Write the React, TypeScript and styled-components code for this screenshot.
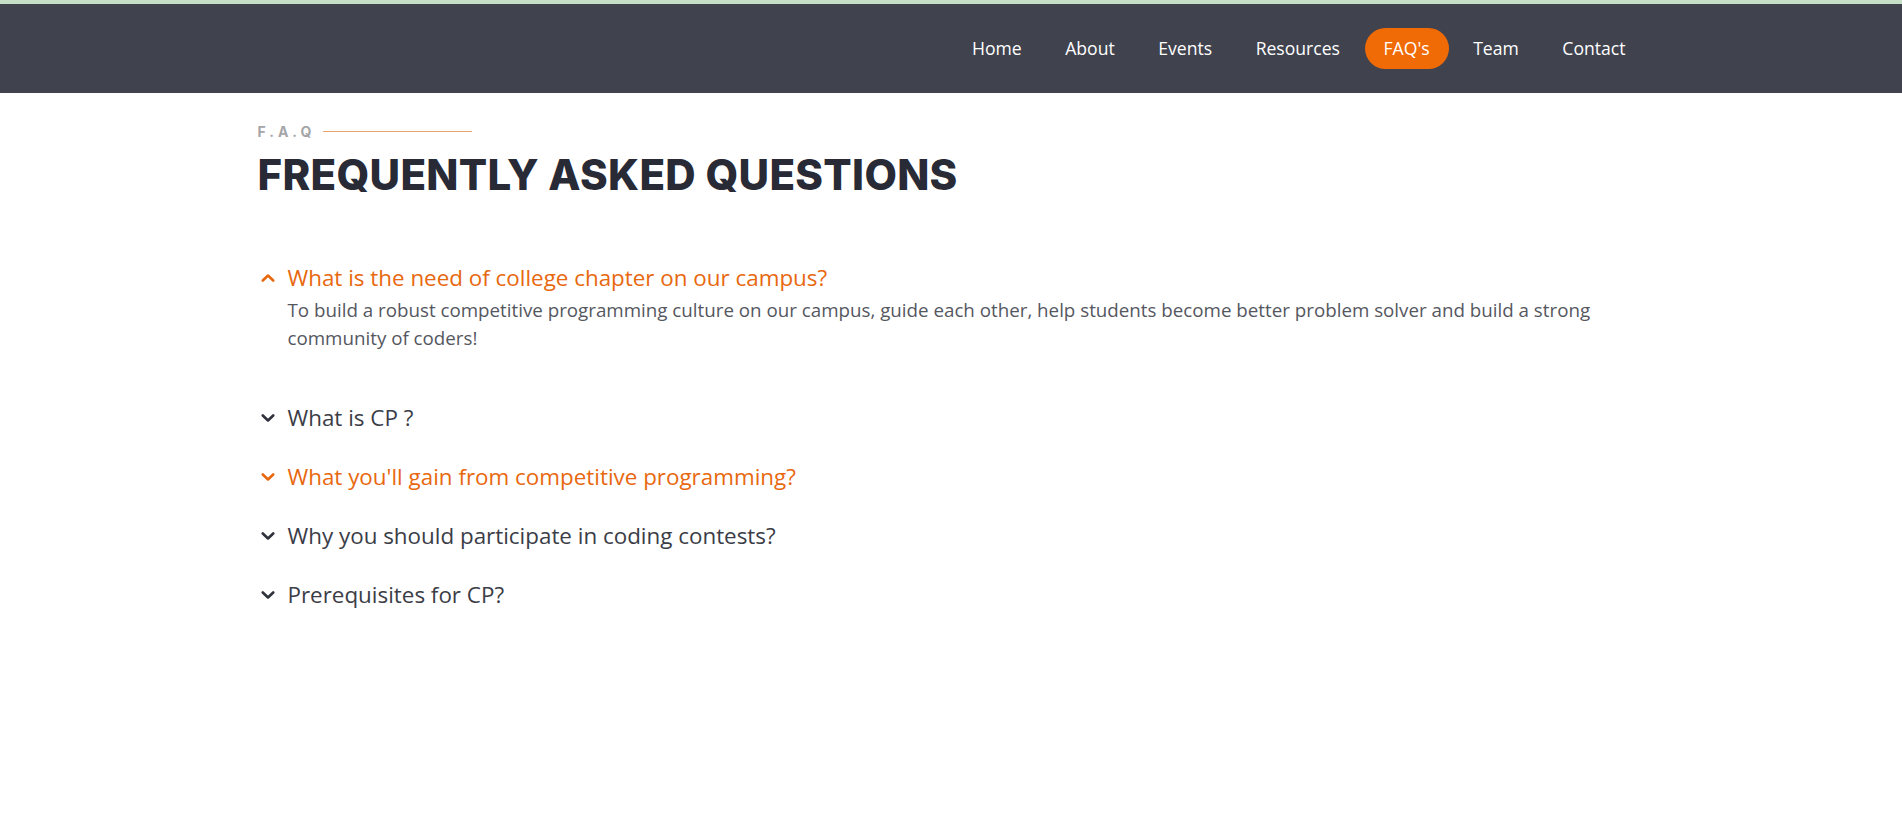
import React, { useState } from "react";
import styled, { createGlobalStyle } from "styled-components";

const GlobalStyle = createGlobalStyle`
  html, body {
    margin: 0;
    padding: 0;
    background: #ffffff;
  }
  body {
    font-family: "Open Sans", "Noto Sans", sans-serif;
    -webkit-font-smoothing: antialiased;
  }
  * { box-sizing: border-box; }
`;

const TopStrip = styled.div`
  height: 4px;
  background: #c6dfc6;
`;

const NavBar = styled.header`
  height: 89px;
  background: #40424e;
  display: flex;
  align-items: center;
`;

const Container = styled.div`
  width: 1387px;
  margin: 0 auto;
`;

const NavInner = styled(Container)`
  display: flex;
  justify-content: flex-end;
  align-items: center;
  gap: 5.5px;
  margin-top: -1px;
`;

const NavLink = styled.a<{ $active?: boolean }>`
  font-family: "Open Sans", sans-serif;
  font-size: 17.6px;
  color: #ffffff;
  text-decoration: none;
  padding: 0 19px;
  height: 41px;
  line-height: 41px;
  border-radius: 21px;
  background: ${(p) => (p.$active ? "#f06a06" : "transparent")};
  cursor: pointer;
`;

const Main = styled(Container)`
  padding-top: 28px;
  padding-bottom: 120px;
`;

const LabelRow = styled.div`
  display: flex;
  align-items: center;
  gap: 8px;
  height: 20px;
`;

const Label = styled.span`
  font-family: "Inter", "Lato", sans-serif;
  font-weight: 700;
  font-size: 14px;
  letter-spacing: 4px;
  color: #a5a5a8;
`;

const LabelLine = styled.span`
  width: 149px;
  height: 1px;
  background: #e9a36c;
`;

const Heading = styled.h1`
  margin: 9px 0 0;
  font-family: "Inter", "Lato", sans-serif;
  font-weight: 800;
  font-size: 42px;
  line-height: 50px;
  letter-spacing: 0.3px;
  color: #282a36;
`;

const List = styled.div`
  margin-top: 63px;
  display: flex;
  flex-direction: column;
  gap: 29px;
`;

const Item = styled.div``;

const Question = styled.button<{ $accent: boolean }>`
  display: flex;
  align-items: center;
  gap: 10px;
  padding: 0;
  border: none;
  background: none;
  cursor: pointer;
  font-family: "Open Sans", sans-serif;
  font-size: 22.4px;
  line-height: 30px;
  font-weight: 400;
  color: ${(p) => (p.$accent ? "#e8680f" : "#3b3d47")};
  text-align: left;
`;

const IconBox = styled.span`
  width: 20px;
  display: flex;
  justify-content: center;
  align-items: center;
`;

const Answer = styled.p`
  margin: 3px 0 0;
  padding: 0 0 22px 30px;
  font-family: "Open Sans", sans-serif;
  font-size: 18.75px;
  font-weight: 400;
  line-height: 28px;
  color: #55575f;
`;

const Chevron: React.FC<{ up: boolean; color: string }> = ({ up, color }) => (
  <svg width="14" height="10" viewBox="0 0 14 10" fill="none">
    <polyline
      points={up ? "1.8,7.5 7,2.5 12.2,7.5" : "1.8,2.5 7,7.5 12.2,2.5"}
      stroke={color}
      strokeWidth="2.6"
      strokeLinecap="round"
      strokeLinejoin="round"
    />
  </svg>
);

type Faq = { q: string; a: string; accent?: boolean };

const faqs: Faq[] = [
  {
    q: "What is the need of college chapter on our campus?",
    a: "To build a robust competitive programming culture on our campus, guide each other, help students become better problem solver and build a strong community of coders!",
  },
  {
    q: "What is CP ?",
    a: "Competitive programming is a mind sport of solving well-defined algorithmic problems under constraints.",
  },
  {
    q: "What you'll gain from competitive programming?",
    a: "Better problem solving skills, speed and confidence for interviews.",
    accent: true,
  },
  {
    q: "Why you should participate in coding contests?",
    a: "Contests push you to learn new techniques and measure your progress.",
  },
  {
    q: "Prerequisites for CP?",
    a: "Basic knowledge of any one programming language.",
  },
];

const navItems = ["Home", "About", "Events", "Resources", "FAQ's", "Team", "Contact"];

export default function App() {
  const [open, setOpen] = useState<number | null>(0);
  return (
    <>
      <GlobalStyle />
      <TopStrip />
      <NavBar>
        <NavInner>
          {navItems.map((n) => (
            <NavLink key={n} $active={n === "FAQ's"}>
              {n}
            </NavLink>
          ))}
        </NavInner>
      </NavBar>
      <Main>
        <LabelRow>
          <Label>F.A.Q</Label>
          <LabelLine />
        </LabelRow>
        <Heading>FREQUENTLY ASKED QUESTIONS</Heading>
        <List>
          {faqs.map((f, i) => {
            const isOpen = open === i;
            const accent = isOpen || !!f.accent;
            const color = accent ? "#e8680f" : "#2f313b";
            return (
              <Item key={f.q}>
                <Question $accent={accent} onClick={() => setOpen(isOpen ? null : i)}>
                  <IconBox>
                    <Chevron up={isOpen} color={color} />
                  </IconBox>
                  {f.q}
                </Question>
                {isOpen && <Answer>{f.a}</Answer>}
              </Item>
            );
          })}
        </List>
      </Main>
    </>
  );
}
